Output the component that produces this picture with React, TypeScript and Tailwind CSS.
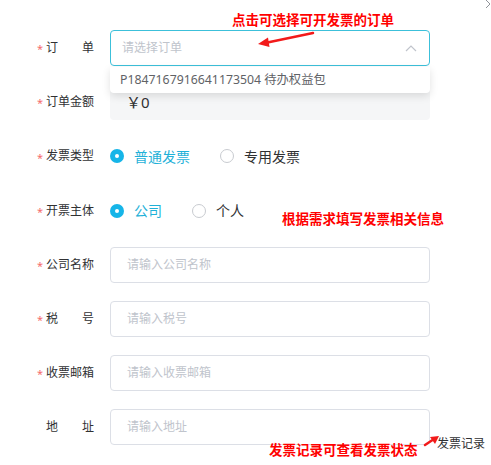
import React from "react";

type FieldProps = {
    label: string;
    required?: boolean;
    spread?: boolean;
    children: React.ReactNode;
};

function Field({ label, required, spread, children }: FieldProps) {
    return (
        <div className="flex flex-row items-center h-9">
            <div className="w-[9px] h-full flex items-center text-[#f56c6c] text-[11px] pt-[3px]">{required ? "*" : ""}</div>
            <div className={`w-12 flex flex-row whitespace-nowrap text-[12px] text-[#303133] ${spread ? "justify-between" : ""}`}>
                {spread ? label.split("").map((c, i) => <span key={i}>{c}</span>) : label}
            </div>
            <div className="ml-4 w-80 h-full">{children}</div>
        </div>
    );
}

function TextInput({ placeholder }: { placeholder: string }) {
    return (
        <div className="h-full w-full border border-[#dcdfe6] rounded-[4px] flex items-center pl-4 text-[12px] text-[#c0c4cc]">
            {placeholder}
        </div>
    );
}

function Radio({ label, checked }: { label: string; checked?: boolean }) {
    return (
        <div className="flex flex-row items-center gap-2.5">
            {checked ? (
                <span className="w-3.5 h-3.5 rounded-full bg-[#16b5e8] flex items-center justify-center">
                    <span className="w-1 h-1 rounded-full bg-white" />
                </span>
            ) : (
                <span className="w-3.5 h-3.5 rounded-full border border-[#c8cbd0] bg-white" />
            )}
            <span className={`text-[14px] ${checked ? "text-[#1fb1d8]" : "text-[#303133]"}`}>{label}</span>
        </div>
    );
}

export default function App() {
    return (
        <div className="relative w-[491px] h-[465px] bg-white overflow-hidden [font-family:'Noto_Sans','Noto_Sans_CJK_SC',sans-serif]">
            <div className="flex flex-col gap-[18.2px] pt-[30px] pl-[37px]">
                <Field label="订单" required spread>
                    <div className="h-full w-full border border-[#3cc0da] rounded-[4px] flex flex-row items-center justify-between pl-[11px] pr-3 text-[12px] text-[#c0c4cc]">
                        请选择订单
                        <svg width="12" height="7" viewBox="0 0 12 7" fill="none">
                            <polyline points="1 6 6 1 11 6" stroke="#c0c4cc" strokeWidth="1.2" />
                        </svg>
                    </div>
                </Field>
                <Field label="订单金额" required>
                    <div className="h-full w-full bg-[#f5f6f7] rounded-[4px] flex items-center pl-4 text-[15px] text-[#303133]">
                        ￥0
                    </div>
                </Field>
                <Field label="发票类型" required>
                    <div className="h-full flex flex-row items-center gap-[30px]">
                        <Radio label="普通发票" checked />
                        <Radio label="专用发票" />
                    </div>
                </Field>
                <Field label="开票主体" required>
                    <div className="h-full flex flex-row items-center gap-[30px]">
                        <Radio label="公司" checked />
                        <Radio label="个人" />
                    </div>
                </Field>
                <Field label="公司名称" required>
                    <TextInput placeholder="请输入公司名称" />
                </Field>
                <Field label="税号" required spread>
                    <TextInput placeholder="请输入税号" />
                </Field>
                <Field label="收票邮箱" required>
                    <TextInput placeholder="请输入收票邮箱" />
                </Field>
                <Field label="地址" spread>
                    <TextInput placeholder="请输入地址" />
                </Field>
            </div>

            {/* dropdown */}
            <div className="absolute left-[110px] top-[67px] w-80 h-[26px] bg-white rounded-b-[4px] shadow-[0_3px_8px_rgba(0,0,0,0.12)] flex items-center pl-2.5 text-[12.3px] text-[#606266]">
                P1847167916641173504 待办权益包
            </div>

            {/* annotations */}
            <div className="absolute left-[232px] top-[10px] text-[13.5px] font-bold text-[#ff0000] leading-5">点击可选择可开发票的订单</div>
            <svg className="absolute left-[255px] top-[28px]" width="62" height="20" viewBox="0 0 62 20">
                <line x1="58" y1="5" x2="10" y2="15" stroke="#f21a1a" strokeWidth="2.5" strokeLinecap="round" />
                <polygon points="3,16 13,9.5 14.5,19" fill="#f21a1a" />
            </svg>
            <div className="absolute left-[282px] top-[209px] text-[13.5px] font-bold text-[#ff0000] leading-5">根据需求填写发票相关信息</div>
            <div className="absolute left-[269px] top-[440px] text-[13.5px] font-bold text-[#ff0000] leading-5">发票记录可查看发票状态</div>
            <svg className="absolute left-[422px] top-[434px]" width="18" height="14" viewBox="0 0 18 14">
                <line x1="3" y1="11" x2="12" y2="5" stroke="#f21a1a" strokeWidth="2.5" strokeLinecap="round" />
                <polygon points="17,2 8,3 13,10" fill="#f21a1a" />
            </svg>
            <div className="absolute left-[437px] top-[435px] text-[12px] text-[#303133] leading-[18px]">发票记录</div>

            {/* close */}
            <svg className="absolute left-[484px] top-0" width="7" height="9" viewBox="0 0 7 9">
                <polyline points="2 0 6 4 2 8" fill="none" stroke="#909399" strokeWidth="1" />
            </svg>
        </div>
    );
}
